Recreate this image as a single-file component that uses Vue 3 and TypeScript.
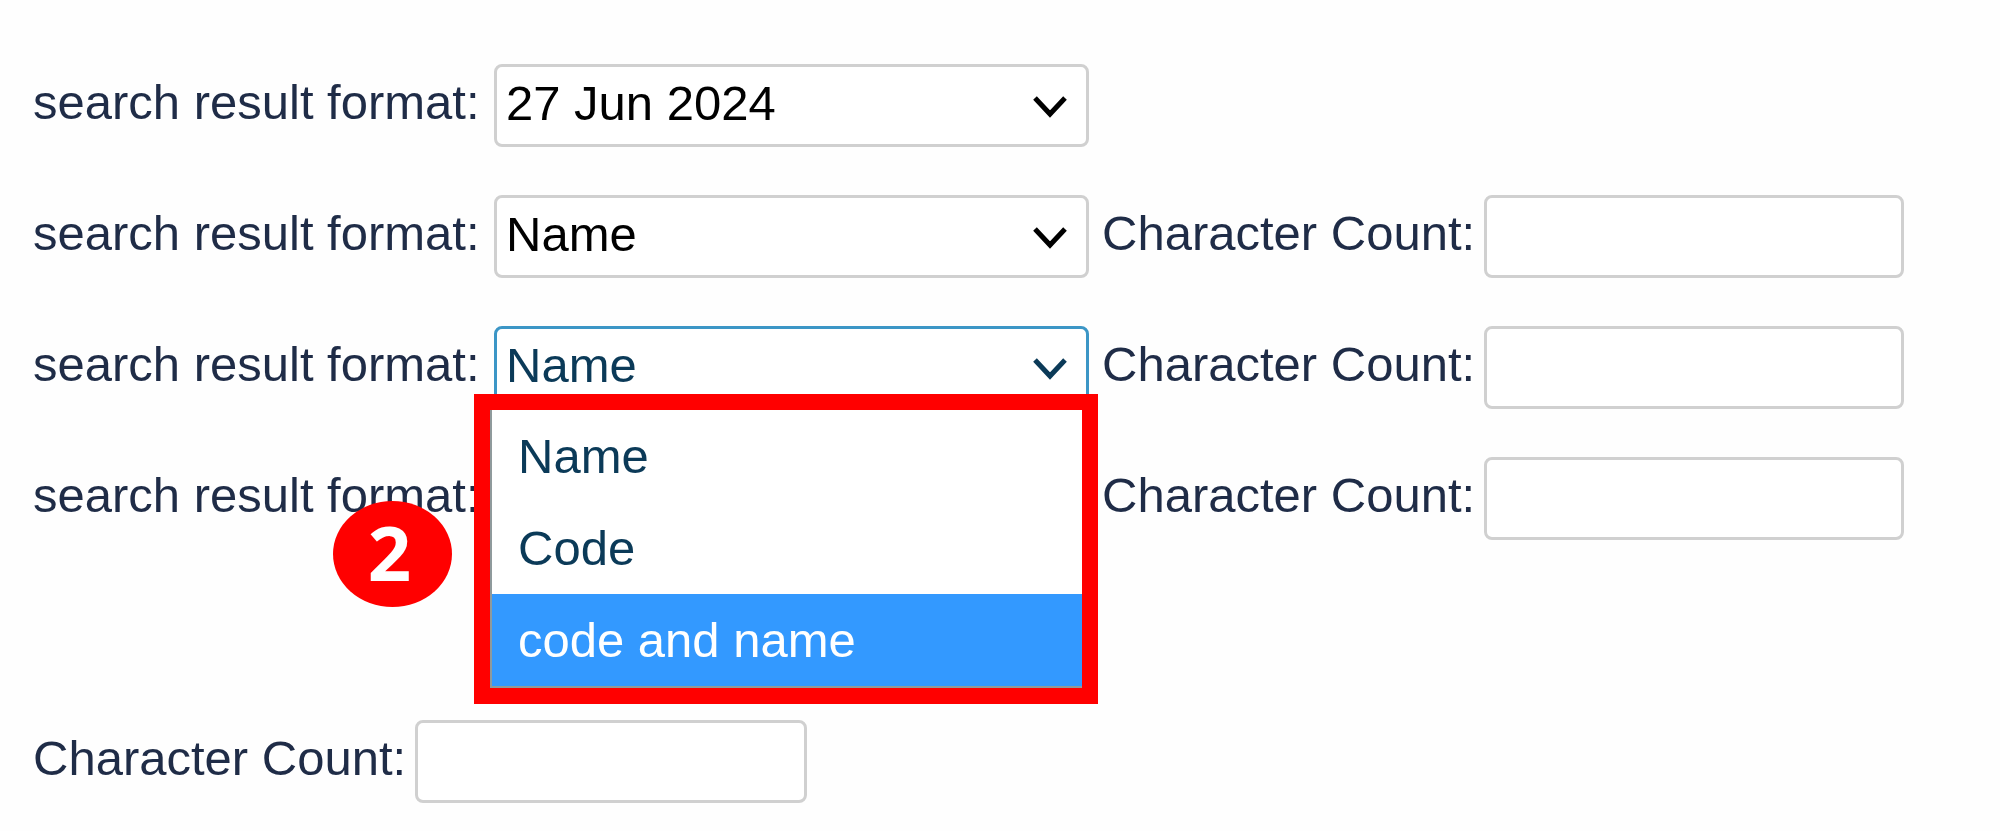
<script setup lang="ts">
import { ref } from 'vue'

interface Row {
  id: string
  options: string[]
  value: string
  hasCount: boolean
  open: boolean
}

const formats = ['Name', 'Code', 'code and name']

const rows = ref<Row[]>([
  { id: 'date', options: ['27 Jun 2024'], value: '27 Jun 2024', hasCount: false, open: false },
  { id: 'first', options: formats, value: 'Name', hasCount: true, open: false },
  { id: 'second', options: formats, value: 'Name', hasCount: true, open: true },
  { id: 'third', options: formats, value: 'Name', hasCount: true, open: false },
])

const highlighted = ref('code and name')

function choose(row: Row, option: string) {
  row.value = option
  row.open = false
}
</script>

<template>
  <form class="form" @submit.prevent>
    <div v-for="row in rows" :key="row.id" class="row">
      <label class="label" :for="`format-${row.id}`">search result format:</label>
      <div class="field" :class="{ open: row.open }">
        <select :id="`format-${row.id}`" v-model="row.value" class="control select">
          <option v-for="option in row.options" :key="option" :value="option">{{ option }}</option>
        </select>
        <svg class="chevron" viewBox="0 0 34 24" aria-hidden="true">
          <path d="M2 3 L17 19 L32 3" fill="none" stroke="currentColor" stroke-width="5" />
        </svg>
        <template v-if="row.open">
          <div class="callout">
            <div class="menu" role="listbox" aria-label="search result format">
              <button
                v-for="option in row.options"
                :key="option"
                type="button"
                role="option"
                class="item"
                :class="{ active: option === highlighted }"
                :aria-selected="option === row.value"
                @mouseenter="highlighted = option"
                @click="choose(row, option)"
              >{{ option }}</button>
            </div>
          </div>
          <span class="badge">2</span>
        </template>
      </div>
      <template v-if="row.hasCount">
        <label class="label" :for="`count-${row.id}`">Character Count:</label>
        <input :id="`count-${row.id}`" class="control" type="text" />
      </template>
    </div>
    <div class="row last">
      <label class="label" for="count-total">Character Count:</label>
      <input id="count-total" class="control" type="text" />
    </div>
  </form>
</template>

<style>
body {
  margin: 0;
  background: #fefefe;
}
</style>

<style scoped>
.form {
  display: flex;
  flex-direction: column;
  gap: 48px;
  padding: 64px 32px 24px 33px;
  font-family: "Liberation Sans", Arial, sans-serif;
  font-size: 49px;
  color: #1f2c47;
}
.row {
  display: grid;
  grid-template-columns: 448px minmax(0, 595px) 369px minmax(0, 420px);
  column-gap: 13px;
}
.last {
  grid-template-columns: 369px minmax(0, 392px);
  margin-top: 132px;
}
.label {
  padding-bottom: 7px;
  line-height: 76px;
  white-space: nowrap;
}
.field {
  position: relative;
  color: #000;
}
.control {
  box-sizing: border-box;
  width: 100%;
  height: 83px;
  margin: 0;
  padding: 0 9px 5px;
  border: 3px solid #d0d0d0;
  border-radius: 8px;
  outline: none;
  background: #fff;
  color: inherit;
  font: inherit;
}
.select {
  display: block;
  appearance: none;
}
.chevron {
  position: absolute;
  top: 31px;
  right: 22px;
  width: 34px;
  height: 24px;
  pointer-events: none;
}
.open {
  z-index: 1;
  color: #0b3a58;
}
.open .control {
  border-color: #3c96c6;
}
.callout {
  position: absolute;
  top: 68px;
  left: -20px;
  right: -9px;
  border: 16px solid #f00;
}
.menu {
  display: flex;
  flex-direction: column;
  border: solid #8f9a9c;
  border-width: 0 0 2px 2px;
  background: #fff;
}
.item {
  height: 92px;
  padding: 0 26px;
  border: 0;
  background: #fff;
  color: inherit;
  font: inherit;
  text-align: left;
}
.active {
  background: #39f;
  color: #fff;
}
.badge {
  box-sizing: border-box;
  position: absolute;
  top: 175px;
  left: -161px;
  width: 119px;
  height: 106px;
  padding-right: 6px;
  border-radius: 50%;
  background: #f00;
  color: #fff;
  font-family: "Open Sans", "Noto Sans", sans-serif;
  font-size: 76px;
  font-weight: 700;
  line-height: 102px;
  text-align: center;
}
</style>
